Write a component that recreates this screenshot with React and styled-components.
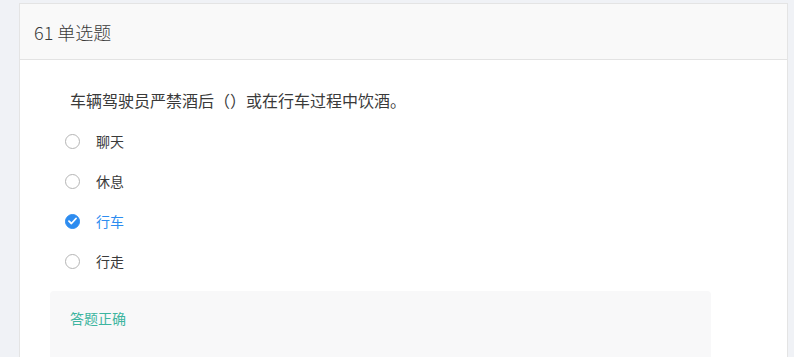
import React from "react";
import styled, { createGlobalStyle } from "styled-components";

const Global = createGlobalStyle`
  html, body { margin: 0; padding: 0; }
  body {
    background: #f0f2f6;
    font-family: "Noto Sans CJK SC", "Microsoft YaHei", sans-serif;
    color: #333;
  }
`;

const Page = styled.div`
  padding: 3px 6px 0 19px;
  height: 357px;
  overflow: hidden;
  box-sizing: border-box;
`;

const Card = styled.div`
  background: #fff;
  border: 1px solid #e4e4e4;
  border-bottom: none;
  height: 400px;
`;

const Header = styled.div`
  height: 55px;
  display: flex;
  align-items: center;
  padding-left: 14px;
  background: #f9f9f9;
  border-bottom: 1px solid #e3e3e3;
  font-size: 18px;
  font-weight: 300;
  color: #3a3a3a;
`;

const Body = styled.div`
  padding: 28px 30px 0 30px;
`;

const Question = styled.div`
  padding-left: 20px;
  font-size: 16px;
  line-height: 24px;
  color: #3a3a3a;
`;

const Options = styled.div`
  margin-top: 9px;
  padding-left: 15px;
`;

const Option = styled.div`
  height: 40px;
  display: flex;
  align-items: center;
  gap: 16px;
  font-size: 14px;
  color: ${(p) => (p.$checked ? "#2d8cf0" : "#3a3a3a")};
`;

const Radio = styled.span`
  width: 15px;
  height: 15px;
  box-sizing: border-box;
  border-radius: 50%;
  border: 1px solid ${(p) => (p.$checked ? "#2d8cf0" : "#b5b5b5")};
  background: ${(p) => (p.$checked ? "#2d8cf0" : "#fff")};
  display: flex;
  align-items: center;
  justify-content: center;
  flex-shrink: 0;
`;

const Result = styled.div`
  margin-top: 10px;
  width: 661px;
  height: 80px;
  box-sizing: border-box;
  background: #f8f8f9;
  border-radius: 4px;
  padding: 17px 20px;
  font-size: 14px;
  line-height: 20px;
  color: #3db5a0;
`;

const options = [
  { label: "聊天" },
  { label: "休息" },
  { label: "行车", checked: true },
  { label: "行走" },
];

export default function App() {
  return (
    <>
      <Global />
      <Page>
        <Card>
          <Header>61 单选题</Header>
          <Body>
            <Question>车辆驾驶员严禁酒后（）或在行车过程中饮酒。</Question>
            <Options>
              {options.map((o) => (
                <Option key={o.label} $checked={o.checked}>
                  <Radio $checked={o.checked}>
                    {o.checked && (
                      <svg width="9" height="8" viewBox="0 0 9 8">
                        <path
                          d="M1 4.2 L3.4 6.5 L8 1.5"
                          fill="none"
                          stroke="#fff"
                          strokeWidth="1.8"
                          strokeLinecap="round"
                          strokeLinejoin="round"
                        />
                      </svg>
                    )}
                  </Radio>
                  <span>{o.label}</span>
                </Option>
              ))}
            </Options>
            <Result>答题正确</Result>
          </Body>
        </Card>
      </Page>
    </>
  );
}
